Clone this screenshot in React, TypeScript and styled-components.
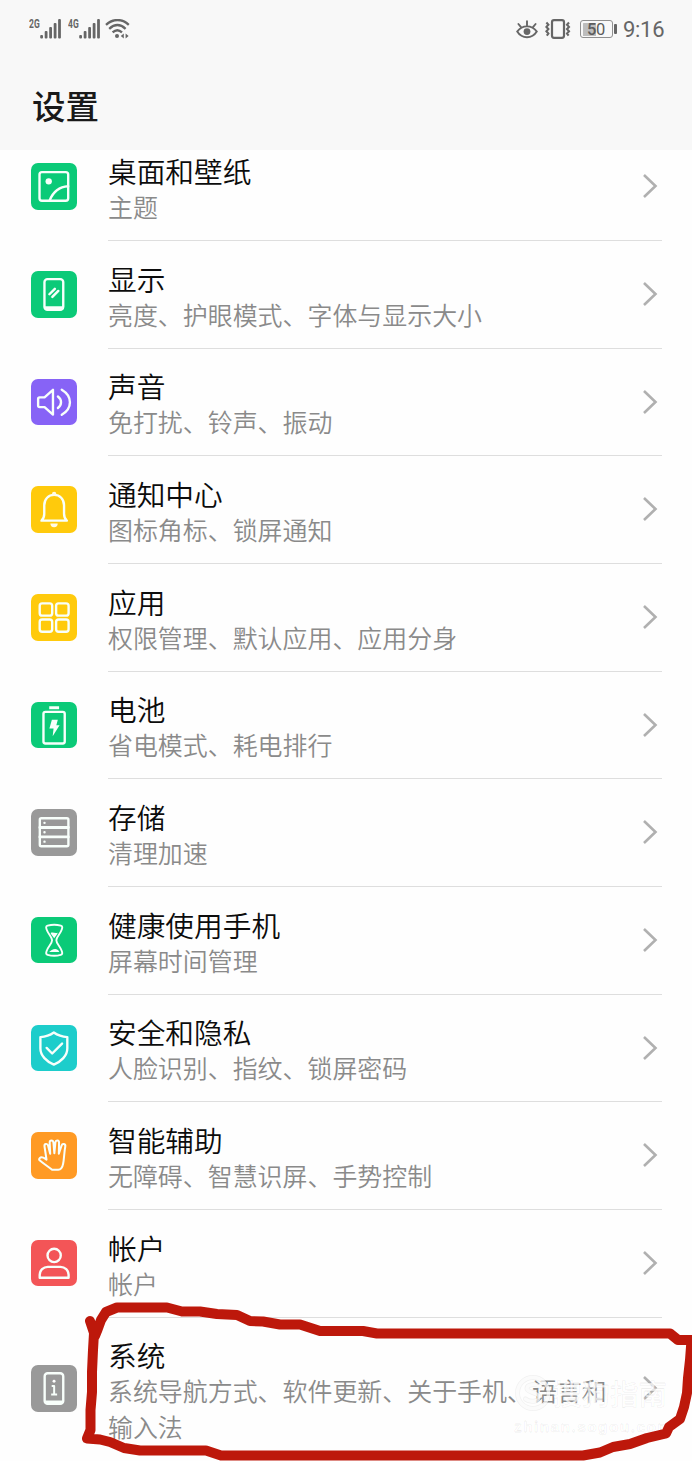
import React from 'react';
import styled, { createGlobalStyle } from 'styled-components';

const GlobalStyle = createGlobalStyle`
  * { box-sizing: border-box; }
  body {
    margin: 0;
    background: #fefefe;
    font-family: Roboto, 'Noto Sans CJK SC', sans-serif;
  }
`;

const Screen = styled.div`
  position: relative;
  width: 692px;
  height: 1461px;
  overflow: hidden;
  background: #fefefe;
`;

const Header = styled.header`
  position: relative;
  z-index: 1;
  height: 150px;
  background: #f8f8f8;
`;

const StatusBar = styled.div`
  display: flex;
  justify-content: space-between;
  height: 58px;
  padding: 0 28px 0 29px;
  color: #666;
`;

const StatusGroup = styled.div`
  display: flex;
  align-items: center;
  svg { display: block; flex: none; }
`;

const NetworkLabel = styled.span`
  display: block;
  width: 10.5px;
  height: 20px;
  font: 700 12.5px/10px Roboto, sans-serif;
  white-space: nowrap;
  & > span {
    display: inline-block;
    transform: scaleX(0.68);
    transform-origin: 0 50%;
  }
`;

const Gap = styled.span<{ $w: number }>`
  flex: none;
  width: ${p => p.$w}px;
`;

const Battery = styled.div`
  display: flex;
  align-items: center;
  &::after {
    content: '';
    width: 2.5px;
    height: 10px;
    margin-left: 1.5px;
    border-radius: 1px;
    background: #666;
  }
`;

const BatteryCell = styled.div`
  width: 33px;
  height: 18px;
  border: 1.5px solid #8f8f8f;
  border-radius: 3px;
  background: linear-gradient(90deg, #bdbdbd 50%, transparent 50%) content-box;
  padding: 1.5px;
  font: 500 16.5px/13px Roboto, sans-serif;
  letter-spacing: -0.3px;
  text-align: center;
  color: #5c5c5c;
  & > span { font-weight: 400; }
`;

const Clock = styled.time`
  width: 41px;
  padding-top: 2px;
  font: 400 22px/26px Roboto, sans-serif;
  letter-spacing: -0.3px;
  white-space: nowrap;
`;

const Title = styled.h1`
  margin: 0;
  padding: 21.5px 0 0 32px;
  font: 500 33.5px/50px 'Noto Sans CJK SC', sans-serif;
  color: #191919;
`;

const List = styled.ul`
  margin: -16.6px 0 0;
  padding: 0 30.5px 0 30.5px;
  list-style: none;
`;

const Row = styled.li<{ $tall?: boolean }>`
  display: flex;
  align-items: center;
  height: ${p => (p.$tall ? 142.5 : 107.67)}px;
`;

const IconTile = styled.div<{ $color: string }>`
  flex: none;
  width: 46.5px;
  height: 46.5px;
  margin: 0 31px 1.2px 0;
  border-radius: 7px;
  background: ${p => p.$color};
  svg { display: block; }
`;

const RowBody = styled.div<{ $last?: boolean }>`
  flex: 1;
  display: flex;
  align-items: center;
  height: 100%;
  border-bottom: ${p => (p.$last ? '0' : '1px solid #dedede')};
`;

const RowText = styled.div`
  flex: 1;
  padding-top: 2.8px;
`;

const Name = styled.div`
  font: 350 28.7px/37px 'Noto Sans CJK SC', sans-serif;
  color: #0c0c0c;
`;

const Detail = styled.div`
  width: 520px;
  margin-top: -1px;
  font: 350 24.95px/36px 'Noto Sans CJK SC', sans-serif;
  color: #8a8a8a;
`;

const Arrow = styled.svg`
  flex: none;
  display: block;
  margin: 0 3.5px 0.8px 0;
`;

const MarkerLayer = styled.svg`
  position: absolute;
  z-index: 3;
  left: 0;
  top: 1290px;
`;

const Watermark = styled.div`
  position: absolute;
  z-index: 2;
  left: 514px;
  top: 1373px;
  width: 156px;
  color: rgba(255, 255, 255, 0.7);
  -webkit-text-stroke: 0.8px rgba(0, 0, 0, 0.06);
`;

const WatermarkBrand = styled.div`
  display: flex;
  align-items: center;
  height: 40px;
  font: 500 28.5px/40px 'Noto Sans CJK SC', sans-serif;
  white-space: nowrap;
  svg { flex: none; margin-right: 1px; }
`;

const WatermarkUrl = styled.div`
  margin-top: 4px;
  font: 700 15.5px/20px 'Liberation Sans', sans-serif;
  letter-spacing: 1.4px;
  white-space: nowrap;
`;

const Signal = () => (
  <svg width="21" height="20" viewBox="0 0 21 20" fill="#666">
    <rect x="0.2" y="16" width="2.8" height="3.6" rx="1" />
    <rect x="4.7" y="12" width="2.8" height="7.6" rx="1" />
    <rect x="9.2" y="8" width="2.8" height="11.6" rx="1" />
    <rect x="13.7" y="4" width="2.8" height="15.6" rx="1" />
    <rect x="18.1" y="0" width="2.8" height="19.6" rx="1" />
  </svg>
);

const Wifi = () => (
  <svg width="25" height="20" viewBox="0 0 25 20" fill="none" stroke="#666" strokeWidth="2.3">
    <path d="M1 5.8C8-.6 17-.6 23.8 5.8M4.2 9.8C9.4 5 15.4 5 20.6 9.8M7.6 13.4C10.6 10.6 14 10.6 17 13.4" />
    <circle cx="12" cy="17" r="2" fill="#666" stroke="none" />
    <path d="M18.8 14.5v5l-3-2.5zM20.6 14.5v5l3-2.5z" fill="#666" stroke="none" />
  </svg>
);

const Eye = () => (
  <svg width="22" height="19" viewBox="0 0 22 19" fill="none" stroke="#666" strokeWidth="1.9" strokeLinecap="round">
    <path d="M1.2 11.6C6 4.6 16 4.6 20.8 11.6 16 19.2 6 19.2 1.2 11.6z" />
    <circle cx="11" cy="11.6" r="3.4" fill="#666" stroke="none" />
    <path d="M11 5.6V1.2M5 7.2L2.4 4M17 7.2L19.6 4" />
  </svg>
);

const Vibrate = () => (
  <svg width="26" height="20" viewBox="0 0 26 20" fill="none" stroke="#666">
    <rect x="7" y="1.2" width="12" height="17.6" rx="2" strokeWidth="2.2" />
    <path d="M1.4 3.5l2 2.2-2 2.2 2 2.2-2 2.2 2 2.2-1.6 2.2M24 3.5l-2 2.2 2 2.2-2 2.2 2 2.2-2 2.2 1.6 2.2" strokeWidth="2.1" />
  </svg>
);

const Glyph = ({ children }: { children: React.ReactNode }) => (
  <svg width="46.5" height="46.5" viewBox="0.4 0 47 47" fill="none" stroke="#f8fffb" strokeWidth="2.4" strokeLinecap="round" strokeLinejoin="round">
    {children}
  </svg>
);

const glyphs = {
  wallpaper: (
    <>
      <rect x="9" y="9.2" width="29" height="29" rx="2.5" />
      <circle cx="18.3" cy="18.5" r="3.2" fill="#f8fffb" stroke="none" />
      <path d="M19.2 38C22.5 29.5 29 24 38 23.5" />
    </>
  ),
  display: (
    <>
      <rect x="14" y="8.2" width="19" height="31" rx="3" />
      <path d="M15 37.3h17" strokeWidth="3.4" />
      <path d="M19 23.5l5.5-5.5M22 26.2l6-6" strokeWidth="2.5" />
    </>
  ),
  sound: (
    <>
      <path d="M22.600 11v25l-8.500-7.600H9.200a1.600 1.600 0 0 1-1.600-1.600v-6.600a1.600 1.600 0 0 1 1.600-1.600h4.900z" />
      <path d="M27.600 17.700c4.200 3.200 4.200 8.400 0 11.600M31.500 10.800c11 6.600 11 18.800 0 25.400" />
    </>
  ),
  bell: (
    <>
      <path d="M11 35c2-1.800 2.800-4 2.800-7V19.500c0-6.300 4.300-10.500 10-10.500s10 4.200 10 10.500V28c0 3 .8 5.200 2.800 7z" />
      <circle cx="23.800" cy="8" r="2.200" fill="#fffbe6" stroke="none" />
      <path d="M20 38a3.700 3.700 0 0 0 7.400 0z" fill="#fffbe6" stroke="none" />
    </>
  ),
  apps: (
    <>
      <rect x="9.200" y="9.500" width="12.600" height="12.400" rx="2.500" />
      <rect x="25.800" y="9.500" width="12.600" height="12.400" rx="2.500" />
      <rect x="9.200" y="25.800" width="12.600" height="12.400" rx="2.500" />
      <rect x="25.800" y="25.800" width="12.600" height="12.400" rx="2.500" />
    </>
  ),
  battery: (
    <>
      <rect x="13" y="10" width="21.500" height="32" rx="2" />
      <path d="M18.800 5.800h10" strokeWidth="3" strokeLinecap="butt" />
      <path d="M21.500 18h6l-1.500 5.500h3.300l-7 11 .9-7.700h-4.200z" fill="#f8fffb" stroke="none" />
    </>
  ),
  storage: (
    <>
      <rect x="9.300" y="9.400" width="28.900" height="28.300" rx="1.500" />
      <path d="M9.300 18.700h28.900M9.300 28.200h28.900" strokeWidth="2.800" />
      <path d="M14 14h.1M14 23.500h.1M14 33h.1" strokeWidth="2.400" />
    </>
  ),
  hourglass: (
    <>
      <path d="M17.200 8.800c4-1.200 9.300-1.200 13.300 0 2 .6 1.600 2 1 3.800-1.500 4.700-5.500 7.500-5.500 10.900s4 6.200 5.500 10.900c.6 1.800 1 3.200-1 3.800-4 1.200-9.300 1.200-13.300 0-2-.6-1.600-2-1-3.800 1.500-4.700 5.500-7.500 5.500-10.900s-4-6.200-5.500-10.900c-.6-1.800-1-3.200 1-3.800z" strokeWidth="1.900" />
      <path d="M20.200 16.200c2.500-1.300 4.500.9 7.300-.3-.9 2-2.600 4-3.700 5.700-1-1.800-2.700-3.400-3.600-5.400zM18.800 35.400c2-2.500 8-5.300 10.200 0z" fill="#f8fffb" stroke="none" />
    </>
  ),
  shield: (
    <>
      <path d="M23.500 7.500c4.300 3 8.700 4.300 13.600 4.700v11.500c0 7.300-6.300 13.300-13.600 16.300C16.200 37 9.900 31 9.900 23.700V12.200c4.900-.4 9.300-1.700 13.600-4.700z" />
      <path d="M16.200 23.200l5.600 5.600 10-10" />
    </>
  ),
  hand: (
    <path d="M21.600 38.200c-3.900-3.400-7.800-5.800-12-9.300-1.600-1.500.1-4.200 3.300-3 1.300.5 2 1.200 3.200 2l-2-13.500c-.3-2.800 2.900-3.300 3.600-.6l2 8.200-.5-11.300c0-2.900 3.400-2.900 3.700 0l.9 10.700 1-11c.4-2.700 3.700-2.300 3.600.4l-.2 11.100 2.700-8.300c.8-2.600 4.200-1.700 3.600 1.200-1.200 6-1 12.500-2.200 17.700-.6 3.200-1.900 5.700-4.700 5.700z" strokeWidth="2" transform="translate(-.5 0) scale(1.030 1)" />
  ),
  person: (
    <>
      <circle cx="23.800" cy="15.600" r="6.700" />
      <path d="M9.200 38.200v-3c0-4.500 3.700-8 8.200-8h12.800c4.500 0 8.200 3.500 8.200 8v3z" />
    </>
  ),
  system: (
    <>
      <rect x="14.200" y="8.300" width="18.800" height="31" rx="3" />
      <path d="M15 37.500h17" strokeWidth="3" />
      <path d="M21.300 21.300h2.500v8.500M20.800 29.800h6" strokeWidth="2" strokeLinecap="butt" />
      <circle cx="23.700" cy="16.500" r="1.500" fill="#fff" stroke="none" />
    </>
  ),
};

type Item = { icon: keyof typeof glyphs; color: string; name: string; detail: string };

const items: Item[] = [
  { icon: 'wallpaper', color: '#0bca78', name: '桌面和壁纸', detail: '主题' },
  { icon: 'display', color: '#0bca78', name: '显示', detail: '亮度、护眼模式、字体与显示大小' },
  { icon: 'sound', color: '#8763f6', name: '声音', detail: '免打扰、铃声、振动' },
  { icon: 'bell', color: '#ffca0c', name: '通知中心', detail: '图标角标、锁屏通知' },
  { icon: 'apps', color: '#ffca0c', name: '应用', detail: '权限管理、默认应用、应用分身' },
  { icon: 'battery', color: '#0bca78', name: '电池', detail: '省电模式、耗电排行' },
  { icon: 'storage', color: '#999999', name: '存储', detail: '清理加速' },
  { icon: 'hourglass', color: '#0bca78', name: '健康使用手机', detail: '屏幕时间管理' },
  { icon: 'shield', color: '#1dcdcb', name: '安全和隐私', detail: '人脸识别、指纹、锁屏密码' },
  { icon: 'hand', color: '#ff9a24', name: '智能辅助', detail: '无障碍、智慧识屏、手势控制' },
  { icon: 'person', color: '#f35557', name: '帐户', detail: '帐户' },
  { icon: 'system', color: '#999999', name: '系统', detail: '系统导航方式、软件更新、关于手机、语言和输入法' },
];

export default function App() {
  return (
    <Screen>
      <GlobalStyle />
      <Header>
        <StatusBar>
          <StatusGroup>
            <NetworkLabel><span>2G</span></NetworkLabel>
            <Signal />
            <Gap $w={7} />
            <NetworkLabel><span>4G</span></NetworkLabel>
            <Gap $w={1} />
            <Signal />
            <Gap $w={5} />
            <Wifi />
          </StatusGroup>
          <StatusGroup>
            <Eye />
            <Gap $w={7.5} />
            <Vibrate />
            <Gap $w={8.5} />
            <Battery>
              <BatteryCell>5<span>0</span></BatteryCell>
            </Battery>
            <Gap $w={6.5} />
            <Clock>9:16</Clock>
          </StatusGroup>
        </StatusBar>
        <Title>设置</Title>
      </Header>
      <List>
        {items.map((item, i) => {
          const last = i === items.length - 1;
          return (
            <Row key={item.name} $tall={last}>
              <IconTile $color={item.color}>
                <Glyph>{glyphs[item.icon]}</Glyph>
              </IconTile>
              <RowBody $last={last}>
                <RowText>
                  <Name>{item.name}</Name>
                  <Detail>{item.detail}</Detail>
                </RowText>
                <Arrow width="16" height="26" viewBox="0 0 16 26" fill="none" stroke="#b0b0b0" strokeWidth="2.600">
                  <path d="M2 2l11.500 11L2 24" />
                </Arrow>
              </RowBody>
            </Row>
          );
        })}
      </List>
      <Watermark>
        <WatermarkBrand>
          <svg width="38" height="38" viewBox="0 0 38 38" fill="none" strokeLinecap="round">
            <g stroke="rgba(0,0,0,0.05)" strokeWidth="5">
              <circle cx="19" cy="19" r="15.500" />
              <path d="M26 12.500c-4-3-13-2.500-13 2s12 3.500 12 8.500-9.500 5.500-13.500 2" />
            </g>
            <g stroke="rgba(255,255,255,0.7)" strokeWidth="3.500">
              <circle cx="19" cy="19" r="15.500" />
              <path d="M26 12.500c-4-3-13-2.500-13 2s12 3.500 12 8.500-9.500 5.500-13.500 2" />
            </g>
          </svg>
          搜狗指南
        </WatermarkBrand>
        <WatermarkUrl>zhinan.sogou.com</WatermarkUrl>
      </Watermark>
      <MarkerLayer width="692" height="171" viewBox="0 1290 692 171" fill="none" stroke="#bd180b" strokeWidth="10" strokeLinecap="round" strokeLinejoin="round">
        <path d="M90 1321L94 1333L93 1350L92 1372L92 1392L90.500 1410L90.500 1430L87 1438.500L100 1439.500L110 1442L124 1448L140 1450.500H206L221 1455.500H583L600 1452.500L613 1447L630 1444L647 1438L666 1433.500L669 1427L680 1419L684 1407L687 1393L688 1378L690 1360L691.500 1340L678 1340L670 1333.500H377L363 1331H320L300 1324.500H280L263 1321.500L250 1321L237 1315L217 1314L200 1311.500H182L167 1307.500H117L106 1312L101 1320L97 1331L95 1336" />
      </MarkerLayer>
    </Screen>
  );
}
